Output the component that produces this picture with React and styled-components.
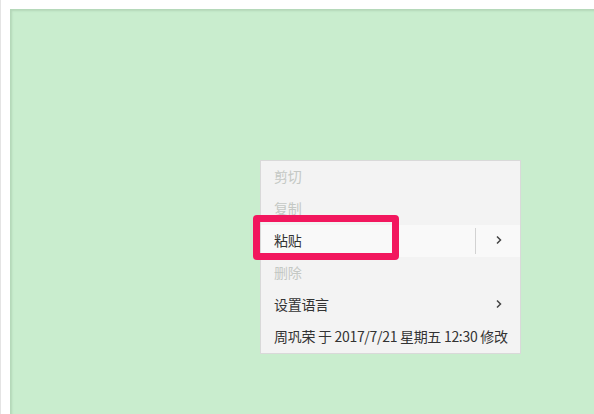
import React from 'react';
import styled, { createGlobalStyle } from 'styled-components';

const GlobalStyle = createGlobalStyle`
  html, body {
    margin: 0;
    padding: 0;
    background: #ffffff;
  }
  body {
    font-family: 'Noto Sans CJK SC', 'Noto Sans', sans-serif;
  }
`;

const Frame = styled.div`
  width: 594px;
  height: 414px;
  box-sizing: border-box;
  padding: 9px 0 0 9px;
  border-left: 1px solid #e4e4e4;
  overflow: hidden;
`;

const Desktop = styled.div`
  position: relative;
  width: 100%;
  height: 100%;
  background: #c9edce;
  box-shadow: inset 2px 2px 2px rgba(120, 150, 125, 0.25);
`;

const Menu = styled.ul`
  position: absolute;
  left: 250px;
  top: 151px;
  width: 261px;
  margin: 0;
  padding: 0;
  list-style: none;
  background: #f3f3f3;
  border: 1px solid #d9d9d9;
  box-sizing: border-box;
`;

const Item = styled.li`
  display: flex;
  align-items: center;
  height: 32px;
  box-sizing: border-box;
  padding: 0 18px 3px 13px;
  font-size: 14px;
  letter-spacing: -0.3px;
  color: ${(p) => (p.disabled ? '#c4c8c4' : '#333333')};
  background: ${(p) => (p.active ? '#f9f9f9' : 'transparent')};
  white-space: nowrap;
`;

const Label = styled.span`
  flex: 1;
`;

const Divider = styled.span`
  width: 1px;
  height: 26px;
  margin-top: 3px;
  background: #d2d2d2;
  margin-right: 20px;
`;

const Highlight = styled.div`
  position: absolute;
  left: 243px;
  top: 206px;
  width: 146px;
  height: 45px;
  box-sizing: border-box;
  border: 7px solid #f2175e;
  border-radius: 4px;
  pointer-events: none;
`;

const Chevron = () => (
  <svg width="6" height="10" viewBox="0 0 6 10">
    <path d="M1 1.5 L4.5 5 L1 8.5" fill="none" stroke="#444" strokeWidth="1.5" />
  </svg>
);

const App = () => {
  return (
    <Frame>
      <GlobalStyle />
      <Desktop>
        <Menu>
          <Item disabled>
            <Label>剪切</Label>
          </Item>
          <Item disabled>
            <Label>复制</Label>
          </Item>
          <Item active>
            <Label>粘贴</Label>
            <Divider />
            <Chevron />
          </Item>
          <Item disabled>
            <Label>删除</Label>
          </Item>
          <Item>
            <Label>设置语言</Label>
            <Chevron />
          </Item>
          <Item>
            <Label>周巩荣 于 2017/7/21 星期五 12:30 修改</Label>
          </Item>
        </Menu>
        <Highlight />
      </Desktop>
    </Frame>
  );
};

export default App;
